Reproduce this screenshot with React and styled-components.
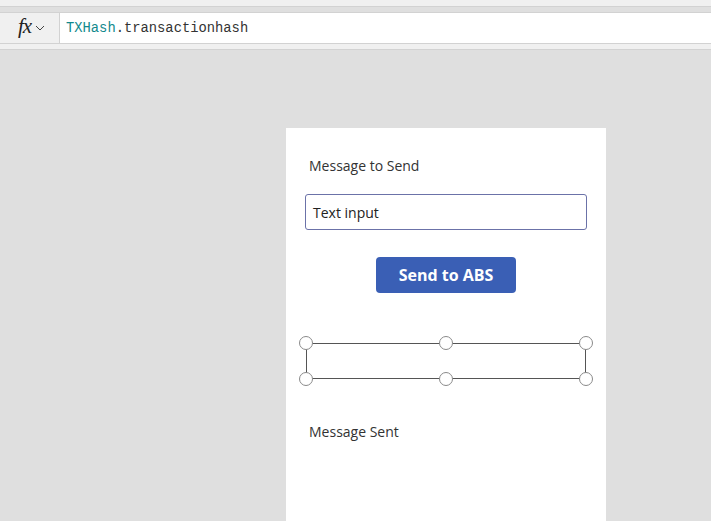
import React from 'react'
import styled, { createGlobalStyle } from 'styled-components'

const Global = createGlobalStyle`
  html, body { margin: 0; padding: 0; }
  body { width: 711px; height: 521px; overflow: hidden; background: #dfdfdf; font-family: 'Open Sans', sans-serif; }
`

const App = () => {
  return (
    <Page>
      <Global />
      <TopStrip />
      <FormulaBar>
        <FxBox>
          <Fx>fx</Fx>
          <svg width="10" height="6" viewBox="0 0 10 6">
            <path d="M1 1 L5 5 L9 1" fill="none" stroke="#444" strokeWidth="1" />
          </svg>
        </FxBox>
        <Formula>
          <Ident>TXHash</Ident>.transactionhash
        </Formula>
      </FormulaBar>
      <BelowStrip />
      <Canvas>
        <Screen>
          <Label>Message to Send</Label>
          <TextInput>Text input</TextInput>
          <ButtonRow>
            <SendButton>Send to ABS</SendButton>
          </ButtonRow>
          <Selection>
            <Handle $x="0%" $y="0%" />
            <Handle $x="50%" $y="0%" />
            <Handle $x="100%" $y="0%" />
            <Handle $x="0%" $y="100%" />
            <Handle $x="50%" $y="100%" />
            <Handle $x="100%" $y="100%" />
          </Selection>
          <Label $top={43}>Message Sent</Label>
        </Screen>
      </Canvas>
    </Page>
  )
}

const Page = styled.div`
  display: flex;
  flex-direction: column;
  width: 711px;
  height: 521px;
`
const TopStrip = styled.div`
  height: 6px;
  background: #f0f0f0;
  border-bottom: 1px solid #d2d2d2;
`
const FormulaBar = styled.div`
  display: flex;
  height: 30px;
  margin-top: 5px;
  border-top: 1px solid #d2d2d2;
  border-bottom: 1px solid #d2d2d2;
  background: #fff;
`
const FxBox = styled.div`
  width: 60px;
  display: flex;
  align-items: center;
  justify-content: center;
  gap: 4px;
  background: #f0f0f0;
  border-right: 1px solid #d2d2d2;
  padding-left: 4px;
  box-sizing: border-box;
`
const Fx = styled.span`
  font-family: 'Liberation Serif', serif;
  font-style: italic;
  font-size: 21px;
  color: #222;
  letter-spacing: -1px;
  margin-top: -3px;
`
const Formula = styled.div`
  display: flex;
  align-items: center;
  padding-left: 6px;
  font-family: 'Liberation Mono', monospace;
  font-size: 13.8px;
  color: #333;
  white-space: pre;
`
const Ident = styled.span`
  color: #12898d;
`
const BelowStrip = styled.div`
  height: 5px;
  background: #f0f0f0;
  border-bottom: 1px solid #d2d2d2;
`
const Canvas = styled.div`
  flex: 1;
  background: #dfdfdf;
  padding-top: 78px;
  padding-left: 286px;
  overflow: hidden;
`
const Screen = styled.div`
  width: 320px;
  height: 400px;
  background: #fff;
  padding: 28px 19px 0 19px;
  box-sizing: border-box;
  display: flex;
  flex-direction: column;
`
const Label = styled.div`
  font-size: 14px;
  color: #333;
  padding-left: 4px;
  margin-top: ${p => (p.$top ? p.$top : 0)}px;
  line-height: 20px;
`
const TextInput = styled.div`
  margin-top: 18px;
  height: 36px;
  box-sizing: border-box;
  border: 1.5px solid #6b72a8;
  border-radius: 3px;
  display: flex;
  align-items: center;
  padding-left: 7px;
  font-size: 14px;
  color: #222;
`
const ButtonRow = styled.div`
  display: flex;
  justify-content: center;
  margin-top: 27px;
`
const SendButton = styled.div`
  width: 140px;
  height: 36px;
  background: #3a5fb5;
  border-radius: 4px;
  color: #fff;
  font-weight: 700;
  font-size: 16px;
  display: flex;
  align-items: center;
  justify-content: center;
`
const Selection = styled.div`
  position: relative;
  margin: 50px 1px 0 1px;
  height: 36px;
  box-shadow: inset 0 0 0 1px #555;
`
const Handle = styled.div`
  position: absolute;
  left: ${p => p.$x};
  top: ${p => p.$y};
  width: 14px;
  height: 14px;
  margin: -7px 0 0 -7px;
  border-radius: 50%;
  background: #fff;
  border: 1px solid #8a8a8a;
  box-sizing: border-box;
`

export default App
